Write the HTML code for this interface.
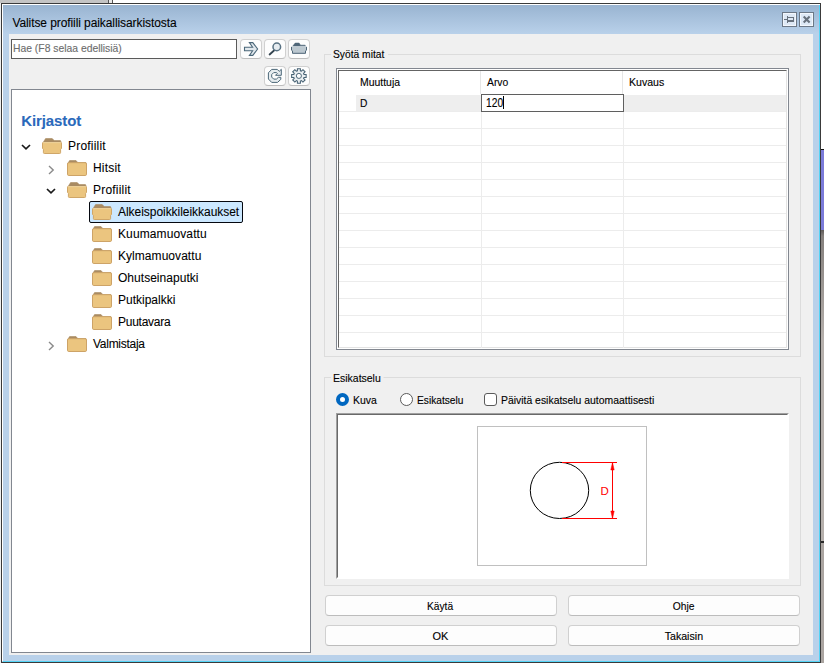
<!DOCTYPE html>
<html lang="fi">
<head>
<meta charset="utf-8">
<title>Valitse profiili paikallisarkistosta</title>
<style>
html,body{margin:0;padding:0;}
body{width:824px;height:663px;overflow:hidden;position:relative;background:#fff;font-family:"Liberation Sans",sans-serif;font-size:11px;color:#000;}
.abs{position:absolute;}
.t{position:absolute;white-space:nowrap;line-height:14px;height:14px;}
.seg{font-size:12px;}
/* backdrop bits */
#bgTopL{left:0;top:0;width:108px;height:3px;background:#c4c4c4;}
#bgTopM{left:108px;top:0;width:5px;height:3px;background:#e8e8e8;border-left:1px solid #555;border-right:1px solid #555;box-sizing:border-box;}
#bgLeft{left:0;top:3px;width:1px;height:660px;background:#eeeeee;}
#bgR1{left:821px;top:0;width:3px;height:149px;background:#fff;}
#bgR2{left:821px;top:149px;width:3px;height:81px;background:#7b7bd9;border-top:1px solid #111;box-sizing:border-box;}
#bgR3{left:821px;top:230px;width:3px;height:433px;background:linear-gradient(to bottom,#5e5a58 0,#85807d 6px,#b6b0ac 110px,#b6b0ac 311px,#2a2a2a 311px,#2a2a2a 313px,#aba5a1 313px,#aba5a1 100%);}
/* window */
#win{left:1px;top:3px;width:820px;height:660px;box-sizing:border-box;border:1px solid #3a3a3a;background:#b9d1ea;}
#winHiT{left:2px;top:4px;width:818px;height:1px;background:#fff;}
#winHiL{left:2px;top:4px;width:1px;height:657px;background:#fff;}
#winCyR{left:819px;top:5px;width:1px;height:657px;background:#55d4f6;}
#winCyB{left:3px;top:661px;width:817px;height:1px;background:#55d4f6;}
#title{left:3px;top:5px;width:816px;height:29px;background:linear-gradient(to bottom,#99b4d1,#b9d1ea);}
#client{left:9px;top:34px;width:804px;height:621px;background:#f0f0f0;}
.capbtn{position:absolute;top:12px;width:15px;height:15px;box-sizing:border-box;border:1px solid #6c7887;background:#dde8f5;}
/* search */
#search{left:11px;top:39px;width:226px;height:20px;box-sizing:border-box;border:1px solid #5a5a5a;background:#fff;}
.tb{position:absolute;width:22px;height:20px;box-sizing:border-box;border:1px solid #d0d0d0;border-bottom-color:#bdbdbd;border-radius:4px;background:#fdfdfd;}
#tree{left:11px;top:89px;width:300px;height:564px;box-sizing:border-box;border:1px solid #828790;background:#fff;}
.grp{position:absolute;box-sizing:border-box;border:1px solid #dcdcdc;}
.grplbl{position:absolute;background:#f0f0f0;padding:0 2px;line-height:13px;white-space:nowrap;}
.btn{position:absolute;box-sizing:border-box;border:1px solid #d0d0d0;border-bottom-color:#bcbcbc;border-radius:4px;background:#fdfdfd;text-align:center;line-height:19px;height:21px;}

/* width fitting */
.t{transform-origin:0 50%;}
#ttl{transform:scaleX(.982);}
#hae{transform:scaleX(.941);}
#g1 {transform:scaleX(.933);transform-origin:2px 50%;}
#g2 {transform:scaleX(.933);transform-origin:2px 50%;}
#h1{transform:scaleX(.948);}
#h2{transform:scaleX(.94);}
#h3{transform:scaleX(.96);}
#r1{transform:scaleX(.937);}
#r2{transform:scaleX(.926);}
#c1{transform:scaleX(.946);}
#b1s{transform:scaleX(.93);}
#b2s{transform:scaleX(.937);}
#b4s{transform:scaleX(.967);}
#ttl{transform:none;letter-spacing:-0.085px;}
#tr0,#tr2{letter-spacing:0.2px;}
#tr1{letter-spacing:0.2px;}
#tr3{letter-spacing:-0.04px;}
#tr4{letter-spacing:0.11px;}
#tr5{letter-spacing:0.05px;}
#tr6{letter-spacing:0.03px;}
#tr8{letter-spacing:-0.26px;}
#tr9{letter-spacing:-0.27px;}
#kirj{letter-spacing:-0.12px;}
#g2{transform:scaleX(.953);margin-top:0.7px;}
#d1{transform:scaleX(.93);}
#r1{margin-left:0.6px;transform:scaleX(.95);}
#r2{margin-left:0.7px;}
#c1{margin-left:0.7px;}
.btn span{position:relative;left:-0.5px;top:0.5px;}
#g1{padding-right:3.5px;}
#g2{padding-right:2.6px;}
.t,.grplbl,.btn{-webkit-text-stroke:0.12px currentColor;}
.seg,#kirj{-webkit-text-stroke:0.08px currentColor;}
#hae{color:#666;}
</style>
</head>
<body>
<div class="abs" id="bgTopL"></div>
<div class="abs" id="bgTopM"></div>
<div class="abs" id="bgLeft"></div>
<div class="abs" id="bgR1"></div>
<div class="abs" id="bgR2"></div>
<div class="abs" id="bgR3"></div>

<div class="abs" id="win"></div>
<div class="abs" id="winHiT"></div>
<div class="abs" id="winHiL"></div>
<div class="abs" id="winCyR"></div>
<div class="abs" id="winCyB"></div>
<div class="abs" id="title"></div>
<div class="abs" id="client"></div>

<span class="t seg" id="ttl" style="left:12.4px;top:16px;">Valitse profiili paikallisarkistosta</span>

<!-- TOOLBAR -->
<!-- caption buttons -->
<div class="capbtn" style="left:782px;top:12px;"><svg width="13" height="13" viewBox="0 0 13 13" style="position:absolute;left:0;top:0"><rect x="0.5" y="0.5" width="12" height="12" fill="none" stroke="#f2f7fd"/><path d="M1 6.5H4 M4.5 3V10 M5 4.5H11 M10.5 4V9" fill="none" stroke="#67717d" stroke-width="1"/><rect x="5" y="7" width="6" height="2" fill="#67717d"/></svg></div>
<div class="capbtn" style="left:799px;top:12px;"><svg width="13" height="13" viewBox="0 0 13 13" style="position:absolute;left:0;top:0"><rect x="0.5" y="0.5" width="12" height="12" fill="none" stroke="#f2f7fd"/><path d="M3.7 3.6L9.6 9.5 M9.6 3.6L3.7 9.5" fill="none" stroke="#67717d" stroke-width="2.1"/></svg></div>

<div class="tb" style="left:240px;top:39px;"><svg width="20" height="18" viewBox="0 0 20 18" style="position:absolute;left:0;top:0"><path d="M3.5 7.2H11.6L8.4 2.6H11.8L16.6 9L11.8 15.4H8.4L11.6 10.7H3.5Z" fill="#e1e8ed" stroke="#4b6779" stroke-width="1.1" stroke-linejoin="miter"/></svg></div>
<div class="tb" style="left:264px;top:39px;"><svg width="20" height="18" viewBox="0 0 20 18" style="position:absolute;left:0;top:0"><path d="M9.6 10L4.6 14.5" stroke="#33434f" stroke-width="1.8" fill="none" stroke-linecap="round"/><circle cx="11.8" cy="6.9" r="3.8" fill="#e6ecf0" stroke="#587182" stroke-width="1.5"/></svg></div>
<div class="tb" style="left:288px;top:39px;"><svg width="20" height="18" viewBox="0 0 20 18" style="position:absolute;left:0;top:0"><path d="M4 5.8L6.2 3.1H10.1L11.5 5.2H16.2V7H4Z" fill="#4f6678" stroke="#4f6678" stroke-width="0.6" stroke-linejoin="round"/><path d="M2.5 6.4H17.5V10.2L16.5 10.9V13.4H3.5V10.9L2.5 10.2Z" fill="#bcc8d0"/><path d="M2.5 6.9V10.2L3.5 10.9V13.3H16.5V10.9L17.5 10.2V6.9" fill="none" stroke="#4f6678" stroke-width="1" stroke-linejoin="round"/><path d="M3.1 6.6H16.9" stroke="#d3dce2" stroke-width="0.8"/></svg></div>
<div class="tb" style="left:264px;top:66px;"><svg width="20" height="18" viewBox="0 0 20 18" style="position:absolute;left:0;top:0"><path d="M6.7 2.4L12.3 2.4L14.2 4.4L16.3 2.3L16.3 8.3L10.5 8.3L12.4 6.4L11.4 5.6L8.7 5.6L6.7 7.6L6.7 10.1L8.7 12.1L11.4 12.1L13.4 10.3L15.8 10.3L15.8 12.4L12.5 15.4L6.7 15.4L3.4 12L3.4 5.8Z" fill="#e6ecef" stroke="#4b6778" stroke-width="1" stroke-linejoin="miter"/></svg></div>
<div class="tb" style="left:288px;top:66px;"><svg width="20" height="18" viewBox="0 0 20 18" style="position:absolute;left:0;top:0"><g transform="translate(9.9,8.9)" fill="#e9eef1" stroke="#476274" stroke-width="1.05" stroke-linejoin="miter"><path d="M5.08 -1.50 L7.25 -1.50 L7.25 1.50 L5.08 1.50 L4.66 2.53 L6.18 4.06 L4.06 6.18 L2.53 4.66 L1.50 5.08 L1.50 7.25 L-1.50 7.25 L-1.50 5.08 L-2.53 4.66 L-4.06 6.18 L-6.18 4.06 L-4.66 2.53 L-5.08 1.50 L-7.25 1.50 L-7.25 -1.50 L-5.08 -1.50 L-4.66 -2.53 L-6.18 -4.06 L-4.06 -6.18 L-2.53 -4.66 L-1.50 -5.08 L-1.50 -7.25 L1.50 -7.25 L1.50 -5.08 L2.53 -4.66 L4.06 -6.18 L6.18 -4.06 L4.66 -2.53Z"/><circle r="2.55" fill="#fdfdfd" stroke-width="0.95"/></g></svg></div>

<div class="abs" id="search"></div>
<span class="t" id="hae" style="left:13px;top:41px;color:#6d6d6d;">Hae (F8 selaa edellisiä)</span>

<!-- TREE -->
<div class="abs" id="tree"></div>


<svg width="0" height="0" style="position:absolute">
<defs>
<symbol id="fc" viewBox="0 0 20 16">
<path d="M0.9 3.2L2.6 0.5H9L10.8 2.6H19V5H0.9Z" fill="#a98b62" stroke="#a98b62" stroke-width="0.6" stroke-linejoin="round"/>
<rect x="0.5" y="2.7" width="19" height="12.8" rx="1.3" fill="#ebc57f" stroke="#cda367" stroke-width="1"/>
</symbol>
<symbol id="fo" viewBox="0 0 20 16">
<path d="M1.4 4L3.6 0.5H10.2L12.2 2.5H18.4L18.9 3.2V6H1.4Z" fill="#a98b62" stroke="#a98b62" stroke-width="0.6" stroke-linejoin="round"/>
<path d="M0.5 5.1Q0.5 4.5 1.1 4.5H18.9Q19.5 4.5 19.5 5.1V10.4L18.6 11.3V14.6Q18.6 15.5 17.7 15.5H2.3Q1.4 15.5 1.4 14.6V11.3L0.5 10.4Z" fill="#ebc57f" stroke="#cfa668" stroke-width="1"/>
<path d="M1.2 4.6H18.8" stroke="#f3d9a3" stroke-width="0.9"/>
</symbol>
<symbol id="cd" viewBox="0 0 10 10"><path d="M1 3L5 6.8L9 3" fill="none" stroke="#1a1a1a" stroke-width="1.7"/></symbol>
<symbol id="cr" viewBox="0 0 10 10"><path d="M3 1.1L7.2 5L3 8.9" fill="none" stroke="#8a8a8a" stroke-width="1.4"/></symbol>
</defs>
</svg>

<span class="t" id="kirj" style="left:21.3px;top:111.7px;font-size:15px;font-weight:bold;color:#2a69bb;line-height:18px;height:18px;">Kirjastot</span>
<svg class="abs" style="left:21.2px;top:141.6px" width="10" height="10"><use href="#cd"/></svg>
<svg class="abs" style="left:42px;top:138px" width="20" height="16"><use href="#fo"/></svg>
<span class="t seg" id="tr0" style="left:68px;top:139px;">Profiilit</span>
<svg class="abs" style="left:45.8px;top:164.5px" width="10" height="10"><use href="#cr"/></svg>
<svg class="abs" style="left:67px;top:160px" width="20" height="16"><use href="#fc"/></svg>
<span class="t seg" id="tr1" style="left:93px;top:161px;">Hitsit</span>
<svg class="abs" style="left:46.2px;top:185.6px" width="10" height="10"><use href="#cd"/></svg>
<svg class="abs" style="left:67px;top:182px" width="20" height="16"><use href="#fo"/></svg>
<span class="t seg" id="tr2" style="left:93px;top:183px;">Profiilit</span>
<div class="abs" id="sel" style="left:89px;top:201px;width:154px;height:22px;box-sizing:border-box;border:1px solid #05080f;border-radius:2px;background:#cce8ff;"></div>
<svg class="abs" style="left:92px;top:204px" width="20" height="16"><use href="#fo"/></svg>
<span class="t seg" id="tr3" style="left:118px;top:205px;">Alkeispoikkileikkaukset</span>
<svg class="abs" style="left:92px;top:226px" width="20" height="16"><use href="#fc"/></svg>
<span class="t seg" id="tr4" style="left:118px;top:227px;">Kuumamuovattu</span>
<svg class="abs" style="left:92px;top:248px" width="20" height="16"><use href="#fc"/></svg>
<span class="t seg" id="tr5" style="left:118px;top:249px;">Kylmamuovattu</span>
<svg class="abs" style="left:92px;top:270px" width="20" height="16"><use href="#fc"/></svg>
<span class="t seg" id="tr6" style="left:118px;top:271px;">Ohutseinaputki</span>
<svg class="abs" style="left:92px;top:292px" width="20" height="16"><use href="#fc"/></svg>
<span class="t seg" id="tr7" style="left:118px;top:293px;">Putkipalkki</span>
<svg class="abs" style="left:92px;top:314px" width="20" height="16"><use href="#fc"/></svg>
<span class="t seg" id="tr8" style="left:118px;top:315px;">Puutavara</span>
<svg class="abs" style="left:45.8px;top:340.5px" width="10" height="10"><use href="#cr"/></svg>
<svg class="abs" style="left:67px;top:336px" width="20" height="16"><use href="#fc"/></svg>
<span class="t seg" id="tr9" style="left:93px;top:337px;">Valmistaja</span>

<!-- RIGHT -->
<div class="grp" style="left:324px;top:54px;width:477px;height:303px;"></div>
<span class="grplbl" id="g1" style="left:331px;top:48px;">Syötä mitat</span>
<div class="abs" id="grid" style="left:336px;top:68px;width:453px;height:282px;box-sizing:border-box;border:1px solid #828790;background:#fff;"></div>
<div class="abs" style="left:338px;top:70px;width:449px;height:278px;box-sizing:border-box;border-left:1px solid #646464;border-top:1px solid #646464;border-right:1px solid #e3e3e3;border-bottom:1px solid #e3e3e3;background:#fff;"></div>
<div class="abs" style="left:356px;top:95px;width:430px;height:16px;background:#eeeeee;"></div>
<div class="abs" style="left:339px;top:111px;width:447px;height:1px;background:#ececec;"></div>
<div class="abs" style="left:339px;top:128px;width:447px;height:1px;background:#ececec;"></div>
<div class="abs" style="left:339px;top:145px;width:447px;height:1px;background:#ececec;"></div>
<div class="abs" style="left:339px;top:162px;width:447px;height:1px;background:#ececec;"></div>
<div class="abs" style="left:339px;top:179px;width:447px;height:1px;background:#ececec;"></div>
<div class="abs" style="left:339px;top:196px;width:447px;height:1px;background:#ececec;"></div>
<div class="abs" style="left:339px;top:213px;width:447px;height:1px;background:#ececec;"></div>
<div class="abs" style="left:339px;top:230px;width:447px;height:1px;background:#ececec;"></div>
<div class="abs" style="left:339px;top:247px;width:447px;height:1px;background:#ececec;"></div>
<div class="abs" style="left:339px;top:264px;width:447px;height:1px;background:#ececec;"></div>
<div class="abs" style="left:339px;top:281px;width:447px;height:1px;background:#ececec;"></div>
<div class="abs" style="left:339px;top:298px;width:447px;height:1px;background:#ececec;"></div>
<div class="abs" style="left:339px;top:315px;width:447px;height:1px;background:#ececec;"></div>
<div class="abs" style="left:339px;top:332px;width:447px;height:1px;background:#ececec;"></div>
<div class="abs" style="left:480px;top:71px;width:1px;height:23px;background:#e6e6e6;"></div><div class="abs" style="left:481px;top:94px;width:1px;height:254px;background:#ececec;"></div>
<div class="abs" style="left:622px;top:71px;width:1px;height:23px;background:#e6e6e6;"></div><div class="abs" style="left:623px;top:94px;width:1px;height:254px;background:#ececec;"></div>
<span class="t" id="h1" style="left:360px;top:75.4px;">Muuttuja</span>
<span class="t" id="h2" style="left:487px;top:75.4px;">Arvo</span>
<span class="t" id="h3" style="left:629px;top:75.4px;">Kuvaus</span>
<span class="t" id="d1" style="left:360px;top:96px;">D</span>
<div class="abs" style="left:481px;top:94px;width:143px;height:18px;box-sizing:border-box;border:1px solid #5f5f5f;background:#fff;"></div>
<span class="t" id="v1" style="left:485.5px;top:95.5px;font-size:12.5px;transform:scaleX(.82);">120</span>
<div class="abs" style="left:503px;top:96px;width:1px;height:13px;background:#000;"></div>
<div class="grp" style="left:324px;top:377px;width:477px;height:209px;"></div>
<span class="grplbl" id="g2" style="left:331px;top:371px;">Esikatselu</span>
<div class="abs" style="left:336px;top:393px;width:13px;height:13px;box-sizing:border-box;border-radius:50%;background:#fff;border:4px solid #0067c0;"></div>
<span class="t" id="r1" style="left:352px;top:393px;">Kuva</span>
<div class="abs" style="left:400px;top:393px;width:13px;height:13px;box-sizing:border-box;border-radius:50%;background:#fff;border:1px solid #5a5a5a;"></div>
<span class="t" id="r2" style="left:416px;top:393px;">Esikatselu</span>
<div class="abs" style="left:484px;top:393px;width:13px;height:13px;box-sizing:border-box;border-radius:3px;background:#fff;border:1px solid #5a5a5a;"></div>
<span class="t" id="c1" style="left:500px;top:393px;">Päivitä esikatselu automaattisesti</span>
<div class="abs" id="prev" style="left:336px;top:413px;width:453px;height:166px;box-sizing:border-box;border:1px solid;border-color:#a0a0a0 #fff #fff #a0a0a0;background:#fff;"><div style="width:100%;height:100%;box-sizing:border-box;border:1px solid;border-color:#696969 #fff #fff #696969;"></div></div>
<svg class="abs" style="left:470px;top:420px" width="190" height="152" viewBox="470 420 190 152">
<rect x="477.5" y="426.5" width="169" height="139" fill="#fff" stroke="#c0c0c0" stroke-width="1"/>
<ellipse cx="559.5" cy="490.4" rx="29.2" ry="28.1" fill="none" stroke="#000" stroke-width="1"/>
<path d="M562 462.5H617 M562 518.5H617 M612.5 463V518" stroke="#f00" stroke-width="1" fill="none"/>
<path d="M612.5 462.5L610.8 470H614.2Z M612.5 518.5L610.8 511H614.2Z" fill="#f00" stroke="#f00" stroke-width="0.5"/>
<text x="600.5" y="495.2" font-family="Liberation Sans, sans-serif" font-size="11.5" fill="#f00">D</text>
</svg>
<div class="btn" id="b1" style="left:325px;top:595px;width:232px;"><span id="b1s" style="display:inline-block">Käytä</span></div>
<div class="btn" id="b2" style="left:568px;top:595px;width:232px;"><span id="b2s" style="display:inline-block">Ohje</span></div>
<div class="btn" id="b3" style="left:325px;top:625px;width:232px;"><span id="b3s" style="display:inline-block">OK</span></div>
<div class="btn" id="b4" style="left:568px;top:625px;width:232px;"><span id="b4s" style="display:inline-block">Takaisin</span></div>

</body>
</html>
